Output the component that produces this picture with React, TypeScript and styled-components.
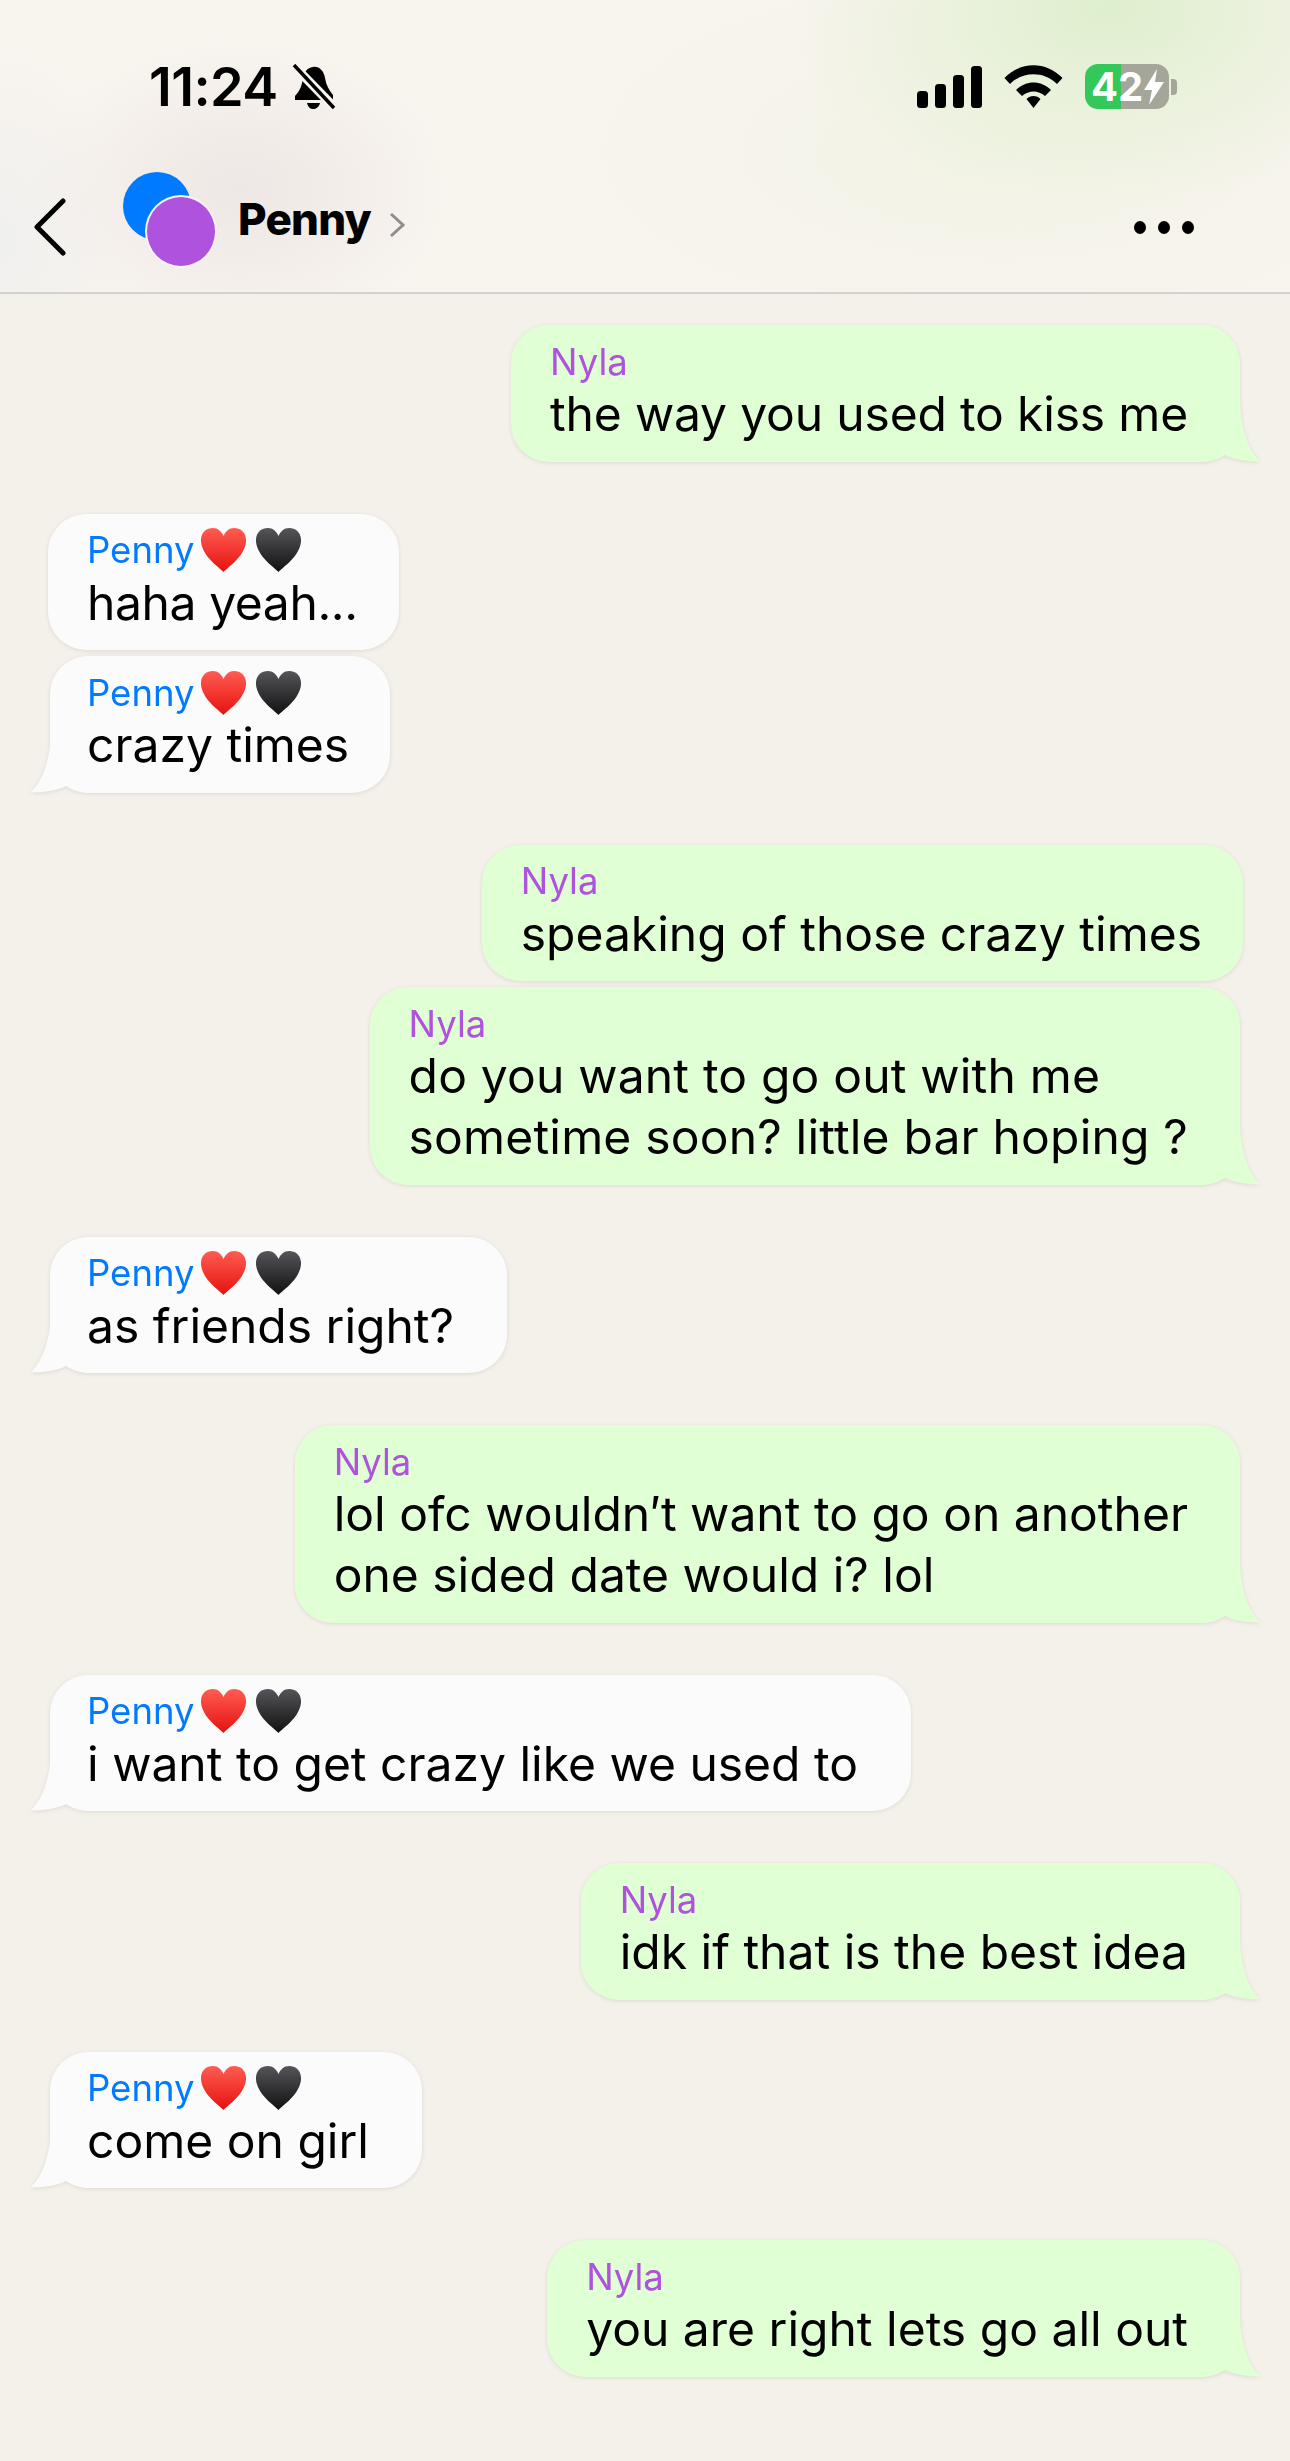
import styled, { createGlobalStyle } from 'styled-components'

const GlobalStyles = createGlobalStyle`
  * { box-sizing: border-box; }
  html, body { margin: 0; padding: 0; }
  body {
    background: #f4f1eb;
    font-family: 'Inter', 'Liberation Sans', sans-serif;
    color: #000;
  }
`

const Page = styled.div`
  width: 1290px;
  height: 2461px;
  background: #f4f1eb;
  overflow: hidden;
`

const Header = styled.header`
  height: 294px;
  border-bottom: 2px solid #d3d1cc;
  background:
    radial-gradient(ellipse 320px 190px at 1110px 10px, #deefcd 0%, rgba(226, 240, 210, 0.75) 35%, rgba(240, 243, 226, 0) 100%),
    radial-gradient(ellipse 420px 180px at 1000px 150px, rgba(241, 243, 228, 0.9) 0%, rgba(240, 243, 226, 0) 100%),
    radial-gradient(ellipse 210px 150px at 240px 190px, #eee7e5 0%, rgba(238, 231, 229, 0) 100%),
    radial-gradient(ellipse 130px 190px at 0px 240px, #f0f0ee 0%, rgba(240, 240, 238, 0) 100%),
    #f8f4ee;
`

const StatusBar = styled.div`
  height: 150px;
  padding: 64px 113px 0 149px;
  display: flex;
  justify-content: space-between;
  align-items: flex-start;
`

const StatusLeft = styled.div`
  display: flex;
  align-items: center;
  gap: 14px;
`

const StatusRight = styled.div`
  display: flex;
  align-items: flex-start;
  gap: 22px;
`

const Clock = styled.span`
  font-size: 54px;
  font-weight: 600;
  line-height: 46px;
  letter-spacing: -0.6px;
`

const Battery = styled.div`
  width: 84px;
  height: 45px;
  border-radius: 13px;
  background: linear-gradient(to right, #34c759 0 36px, #a3a698 36px);
  color: #fff;
  font-size: 40px;
  font-weight: 700;
  line-height: 45px;
  padding-left: 6px;
  display: flex;
  align-items: center;
`

const BatteryWrap = styled.div`
  display: flex;
  align-items: center;
  gap: 2px;
`

const BatteryNub = styled.div`
  width: 6px;
  height: 16px;
  border-radius: 0 4px 4px 0;
  background: #a3a698;
`

const NavBar = styled.div`
  height: 142px;
  display: flex;
  align-items: flex-start;
  padding: 22px 96px 0 34px;
`

const BackIcon = styled.svg`
  width: 32px;
  height: 58px;
  margin-top: 26px;
  flex: none;
`

const Avatars = styled.div`
  position: relative;
  width: 94px;
  height: 96px;
  margin-left: 57px;
  flex: none;
`

const AvatarBack = styled.div`
  width: 68px;
  height: 68px;
  border-radius: 50%;
  background: #007aff;
`

const AvatarFront = styled.div`
  position: absolute;
  left: 22px;
  top: 23px;
  width: 72px;
  height: 73px;
  border-radius: 50%;
  background: #af52de;
  border: 2px solid #fbf3fb;
`

const ContactName = styled.span`
  margin-left: 21px;
  margin-top: 20px;
  font-size: 44px;
  font-weight: 800;
  line-height: 54px;
  letter-spacing: -0.8px;
`

const Chevron = styled.svg`
  width: 16px;
  height: 26px;
  margin: 40px 0 0 18px;
  flex: none;
`

const NavSpacer = styled.div`
  flex: 1;
`

const Dots = styled.div`
  display: flex;
  gap: 12px;
  margin-top: 49px;
`

const Dot = styled.span`
  width: 12px;
  height: 13px;
  border-radius: 50%;
  background: #000;
`

const Thread = styled.main`
  display: flex;
  flex-direction: column;
  gap: 52px;
  padding: 31px 47px 0 48px;
`

const Group = styled.section<{ $mine?: boolean }>`
  display: flex;
  flex-direction: column;
  gap: 6px;
  align-items: ${({ $mine }) => ($mine ? 'flex-end' : 'flex-start')};
`

const Bubble = styled.div<{ $mine?: boolean; $tail?: boolean; $roomy?: boolean }>`
  position: relative;
  padding: 15px 41px 17.5px 39px;
  border-radius: 38px;
  background: ${({ $mine }) => ($mine ? '#e1ffd4' : '#fbfbfb')};
  filter: drop-shadow(0 1px 2px rgba(90, 80, 60, 0.14));
  ${({ $mine, $tail }) => $tail && $mine && 'margin-right: 3px; padding-right: 52px;'}
  ${({ $mine, $tail }) => $tail && !$mine && 'margin-left: 2px; padding-left: 37px;'}
  ${({ $roomy }) => $roomy && 'padding-right: 53px;'}
`

const Tail = styled.svg<{ $mine?: boolean }>`
  position: absolute;
  z-index: -1;
  bottom: 0;
  width: 82px;
  height: 60px;
  ${({ $mine }) => ($mine ? 'right: -21px;' : 'left: -20px; transform: scaleX(-1);')}
`

const NameRow = styled.div`
  display: flex;
  align-items: center;
  height: 43px;
`

const Name = styled.span<{ $mine?: boolean }>`
  font-size: 36.5px;
  line-height: 44px;
  color: ${({ $mine }) => ($mine ? '#af52de' : '#007aff')};
`

const Hearts = styled.div`
  display: flex;
  gap: 10px;
  margin-left: 6px;
`

const HeartIcon = styled.svg`
  width: 45px;
  height: 44px;
  flex: none;
`

const Text = styled.div<{ $track?: number }>`
  font-size: 48px;
  line-height: 61px;
  white-space: pre;
  letter-spacing: ${({ $track }) => $track ?? 0}px;
`

const HEART_PATH =
  'M23 42 C19 38 3 28 2 15 C1.5 7 7 3 13 3 C18 3 21 6 23 10 C25 6 28 3 33 3 C39 3 44.500 7 44 15 C43 28 27 38 23 42 Z'

function Heart({ id, top, bottom }: { id: string; top: string; bottom: string }) {
  return (
    <HeartIcon viewBox="2 3 42 39" preserveAspectRatio="none">
      <defs>
        <linearGradient id={id} x1="0" y1="0" x2="0" y2="1">
          <stop offset="0" stopColor={top} />
          <stop offset="1" stopColor={bottom} />
        </linearGradient>
      </defs>
      <path d={HEART_PATH} fill={`url(#${id})`} />
    </HeartIcon>
  )
}

type Message = { text: string; tail?: boolean; track?: number }

const thread: { mine: boolean; messages: Message[] }[] = [
  { mine: true, messages: [{ text: 'the way you used to kiss me', tail: true, track: -0.17 }] },
  {
    mine: false,
    messages: [{ text: 'haha yeah...', track: -0.4 }, { text: 'crazy times', tail: true }],
  },
  {
    mine: true,
    messages: [
      { text: 'speaking of those crazy times' },
      { text: 'do you want to go out with me\nsometime soon? little bar hoping ?', tail: true, track: 0.18 },
    ],
  },
  { mine: false, messages: [{ text: 'as friends right?', tail: true }] },
  {
    mine: true,
    messages: [{ text: 'lol ofc wouldn\u2032t want to go on another\none sided date would i? lol', tail: true }],
  },
  { mine: false, messages: [{ text: 'i want to get crazy like we used to', tail: true }] },
  { mine: true, messages: [{ text: 'idk if that is the best idea', tail: true }] },
  { mine: false, messages: [{ text: 'come on girl', tail: true }] },
  { mine: true, messages: [{ text: 'you are right lets go all out', tail: true }] },
]

function App() {
  return (
    <Page>
      <GlobalStyles />
      <Header>
        <StatusBar>
          <StatusLeft>
            <Clock>11:24</Clock>
            <svg width="44" height="46" viewBox="0 0 44 46">
              <path d="M21 3 C27 2 32 7 33 14 C34 21 37 26 41 31 L41 36 L3 36 L3 32 C8 27 10 21 11 14 C12 8 15 4 21 3 Z" fill="#000" />
              <path d="M15 39 H28 C27 43 24 45 21 45 C18 45 16 43 15 39 Z" fill="#000" />
              <path d="M1 1 L43 44" stroke="#f8f4ee" strokeWidth="9" />
              <path d="M2 1 L42 44" stroke="#000" strokeWidth="3.500" />
            </svg>
          </StatusLeft>
          <StatusRight>
            <svg width="65" height="42" viewBox="0 0 65 42" style={{ marginTop: 2 }}>
              <rect x="0" y="25" width="11" height="17" rx="3.500" fill="#000" />
              <rect x="18" y="18" width="11" height="24" rx="3.500" fill="#000" />
              <rect x="36" y="9" width="11" height="33" rx="3.500" fill="#000" />
              <rect x="54" y="0" width="11" height="42" rx="3.500" fill="#000" />
            </svg>
            <svg width="59" height="43" viewBox="0 0 59 43" style={{ marginTop: 1 }}>
              <path d="M0.500 13 C17 -4 42 -4 58.500 13 L53 19 C40 6 19 6 6 19 Z" fill="#000" />
              <path d="M12 25 C22 15 37 15 47 25 L41 31 C34 25 25 25 18 31 Z" fill="#000" />
              <path d="M22.500 34 C26 30 33 30 36.500 34 L29.500 43 Z" fill="#000" />
            </svg>
            <BatteryWrap>
              <Battery>
                42
                <svg width="22" height="38" viewBox="0 0 22 38">
                  <path d="M14 1 L1 22 H9 L6 37 L21 14 H12 Z" fill="#fff" />
                </svg>
              </Battery>
              <BatteryNub />
            </BatteryWrap>
          </StatusRight>
        </StatusBar>
        <NavBar>
          <BackIcon viewBox="0 0 32 58">
            <path d="M29 3 L3 29 L29 55" fill="none" stroke="#000" strokeWidth="5" strokeLinecap="round" strokeLinejoin="round" />
          </BackIcon>
          <Avatars>
            <AvatarBack />
            <AvatarFront />
          </Avatars>
          <ContactName>Penny</ContactName>
          <Chevron viewBox="0 0 16 26">
            <path d="M2 2 L14 13 L2 24" fill="none" stroke="#8e8e8e" strokeWidth="3" />
          </Chevron>
          <NavSpacer />
          <Dots>
            <Dot />
            <Dot />
            <Dot />
          </Dots>
        </NavBar>
      </Header>
      <Thread>
        {thread.map((group, g) => (
          <Group key={g} $mine={group.mine}>
            {group.messages.map((message, m) => (
              <Bubble
                key={m}
                $mine={group.mine}
                $tail={message.tail}
                $roomy={!group.mine && group.messages.length === 1}
              >
                {message.tail && (
                  <Tail $mine={group.mine} viewBox="0 0 82 60">
                    <path
                      d="M61 0 C62 30 71 50 81 59 C71 60 56 58 46 53 C40 57 30 60 20 60 L0 60 L0 0 Z"
                      fill={group.mine ? '#e1ffd4' : '#fbfbfb'}
                    />
                  </Tail>
                )}
                <NameRow>
                  <Name $mine={group.mine}>{group.mine ? 'Nyla' : 'Penny'}</Name>
                  {!group.mine && (
                    <Hearts>
                      <Heart id={`red-${g}-${m}`} top="#ff5c52" bottom="#e5120f" />
                      <Heart id={`black-${g}-${m}`} top="#55555a" bottom="#111" />
                    </Hearts>
                  )}
                </NameRow>
                <Text $track={message.track}>{message.text}</Text>
              </Bubble>
            ))}
          </Group>
        ))}
      </Thread>
    </Page>
  )
}

export default App
